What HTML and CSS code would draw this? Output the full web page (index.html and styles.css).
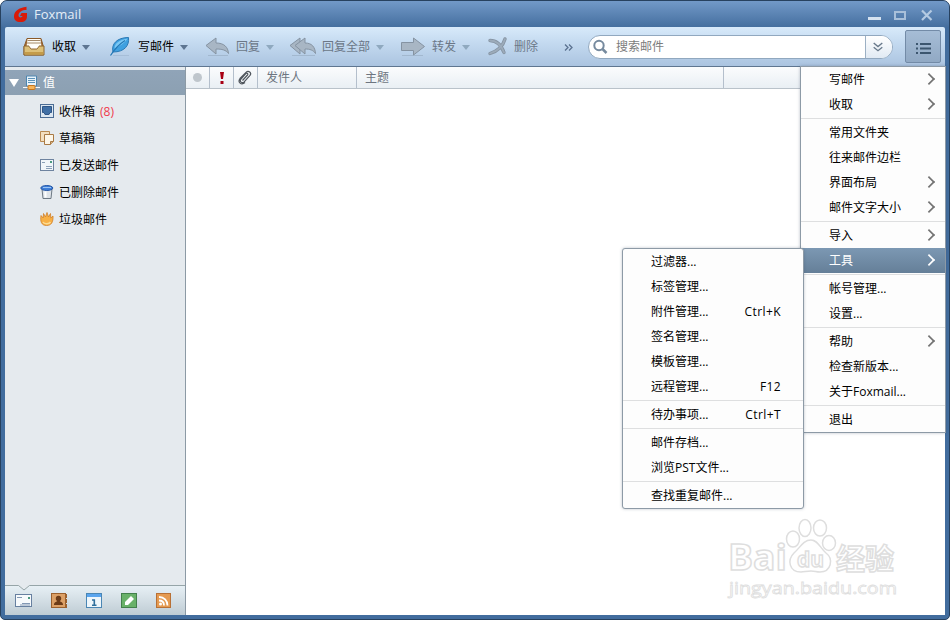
FILE: index.html
```html
<!DOCTYPE html>
<html lang="zh-CN">
<head>
  <meta charset="UTF-8">
  <title>Foxmail</title>
  <link rel="stylesheet" href="styles.css">
</head>
<body>
  <div class="window">
    <!-- 标题栏 -->
    <header class="titlebar">
      <svg class="logo" width="16" height="17" viewBox="0 0 16 17"><path d="M13.500.800v3.200C9 4 5.500 6 5.500 9.500c0 2.300 3.500 2.700 4 .5H7L8.500 7H14v3c0 4-2 6-6.500 6S1 14 1 10.500C1 5 6 1.800 13.500.800z" fill="#d91a08"/></svg>
      <span class="title">Foxmail</span>
      <svg class="win-buttons" width="68" height="16" viewBox="0 0 68 16">
        <path d="M1 12.500h13" stroke="#d5e2f0" stroke-width="3"/>
        <rect x="28" y="6" width="10" height="7" fill="none" stroke="#a9c0da" stroke-width="2"/>
        <path d="M55 4.500l9.500 9.500M64.500 4.500L55 14" stroke="#b4cae2" stroke-width="2.200"/>
      </svg>
    </header>

    <!-- 工具栏 -->
    <div class="toolbar">
      <div class="tool tool-receive">
        <svg width="24" height="24" viewBox="0 0 24 24">
          <path d="M5 3.500h14l2.500 8.500v8H2v-8z" fill="#a06a35" stroke="#8a5a2a"/>
          <path d="M5.500 4h13l1 8H4.500z" fill="#fffdf6"/>
          <path d="M5.500 5.500h13M5 8h14" stroke="#a58a6a"/>
          <path d="M2 11h5l2 3h6l2-3h5v9H2z" fill="#ddc078" stroke="#8c642e"/>
          <path d="M7 10.500l2 3h6l2-3z" fill="#fff"/>
          <path d="M3 17h18v2.500H3z" fill="#c49b49"/>
        </svg>
        <span>收取</span><i class="drop"></i>
      </div>
      <div class="tool tool-write">
        <svg width="24" height="24" viewBox="0 0 24 24">
          <path d="M4 20.500h16" stroke="#9db5cf" opacity=".6"/>
          <path d="M4 17C2 9 8 2.500 19.500 2.500c1 8-4 14.500-15.500 14.500z" fill="#3fa0e0" stroke="#2a79b5"/>
          <path d="M5.500 13.500C5.500 8.500 10 5 18.500 3.500c-3 5-7 7-13 10z" fill="#7cc8f4"/>
          <path d="M1.500 20.500C5 15 9 10 16 5.500" fill="none" stroke="#2277b5" stroke-width="1.200"/>
        </svg>
        <span>写邮件</span><i class="drop"></i>
      </div>
      <div class="tool tool-reply off">
        <svg width="25" height="24" viewBox="0 0 25 24">
          <path d="M3 20.500h20" stroke="#8fa3b8" opacity=".5"/>
          <path d="M1 10.500L11 3v5c8 0 12 4 12.500 10.500C21 15 17 14 11 14v5z" fill="#a8b6c4" stroke="#8593a2"/>
        </svg>
        <span>回复</span><i class="drop"></i>
      </div>
      <div class="tool tool-replyall off">
        <svg width="28" height="24" viewBox="0 0 28 24">
          <path d="M3 20.500h23" stroke="#8fa3b8" opacity=".5"/>
          <path d="M1 10.500L11 3v16z" fill="#a8b6c4" stroke="#8593a2"/>
          <path d="M6 10.500L16 3v5c7 0 10 4 10.500 10.500C24 15 21 14 16 14v5z" fill="#a8b6c4" stroke="#8593a2"/>
        </svg>
        <span>回复全部</span><i class="drop"></i>
      </div>
      <div class="tool tool-forward off">
        <svg width="26" height="24" viewBox="0 0 26 24">
          <path d="M2 20.500h21" stroke="#8fa3b8" opacity=".5"/>
          <path d="M1.500 7.500h12V3L24.500 11.500 13.500 20v-4.500h-12z" fill="#a8b6c4" stroke="#8593a2"/>
        </svg>
        <span>转发</span><i class="drop"></i>
      </div>
      <div class="tool tool-delete off">
        <svg width="21" height="24" viewBox="0 0 21 24">
          <path d="M3 5.500c6 0 11 4 14 12M18 4C16 11 11 16 3 18.500" fill="none" stroke="#8593a2" stroke-width="3.400" stroke-linecap="round"/>
          <path d="M3 5.500c6 0 11 4 14 12M18 4C16 11 11 16 3 18.500" fill="none" stroke="#9cabba" stroke-width="1.800" stroke-linecap="round"/>
        </svg>
        <span>删除</span>
      </div>
      <svg class="more" width="10" height="8" viewBox="0 0 10 8"><path d="M1 1.500l3 3-3 3M5 1.500l3 3-3 3" fill="none" stroke="#5b7290" stroke-width="1.300"/></svg>
      <div class="search">
        <svg class="glass" width="16" height="16" viewBox="0 0 16 16"><circle cx="6" cy="6.500" r="4.700" fill="none" stroke="#768a9e" stroke-width="2"/><path d="M9.500 10l4 4" stroke="#768a9e" stroke-width="2.500"/></svg>
        <span class="placeholder">搜索邮件</span>
        <span class="expand"><svg width="10" height="10" viewBox="0 0 10 10"><path d="M.7 1l4.300 3.500L9.300 1M.7 5.200L5 8.700l4.300-3.500" fill="none" stroke="#68798b" stroke-width="1.400"/></svg></span>
      </div>
      <div class="menu-button">
        <svg width="16" height="13" viewBox="0 0 16 13"><path d="M0 2h2M4 2h11M0 6.500h2M4 6.500h11M0 11h2M4 11h11" stroke="#3c566f" stroke-width="2"/></svg>
      </div>
    </div>

    <div class="content">
      <!-- 文件夹 -->
      <aside class="sidebar">
        <div class="account">
          <svg class="tri" width="10" height="8" viewBox="0 0 10 8"><path d="M0 0h10L5 8z" fill="#fff"/></svg>
          <svg width="17" height="16" viewBox="0 0 17 16">
            <path d="M3.500 1h10v10h-10z" fill="#e8f3fa" stroke="#4e86b0"/>
            <path d="M5 3.500h7M5 5.500h7M5 7.500h7" stroke="#5c93ba"/>
            <path d="M0 12.500h17" stroke="#f5f9fb"/>
            <rect x="5" y="10.500" width="7" height="4" rx="1" fill="#f5b45a" stroke="#c8751c"/>
          </svg>
          <span>值</span>
        </div>
        <ul class="folders">
          <li>
            <svg width="16" height="16" viewBox="0 0 16 16"><rect x=".5" y=".5" width="13" height="13" fill="#dce7f1" stroke="#4a6c94"/><path d="M2.500 2.500h9v6H10l-1 2H5l-1-2H2.500z" fill="#3f6fa5" stroke="#2f5687"/></svg>
            <span>收件箱</span><span class="count">(8)</span>
          </li>
          <li>
            <svg width="16" height="16" viewBox="0 0 16 16"><path d="M.5.500h9v10h-9z" fill="#f3dfc0" stroke="#b98a52"/><path d="M4.500 3.500h9v7l-3 3h-6z" fill="#fdf6e8" stroke="#a97a45"/><path d="M13.500 10.500h-3v3" fill="#d7b488" stroke="#a97a45"/></svg>
            <span>草稿箱</span>
          </li>
          <li>
            <svg width="16" height="16" viewBox="0 0 16 16"><rect x=".5" y="1.500" width="13" height="11" fill="#f1f6fa" stroke="#6e839f"/><path d="M2 4.500h3M6 8.500h6M6 10.500h6" stroke="#8ba0b8"/><path d="M10 3h2v2h-2z" fill="#4c9a80"/></svg>
            <span>已发送邮件</span>
          </li>
          <li>
            <svg width="16" height="16" viewBox="0 0 16 16"><path d="M2 4h10l-1 9.500H3z" fill="#dfe4e8" stroke="#6d7984"/><path d="M5.500 6.500v6" stroke="#fff" stroke-width="2"/><ellipse cx="6.800" cy="3" rx="6" ry="2.500" fill="#3f7fd8" stroke="#2758a6"/><path d="M3 2.500h8" stroke="#9cc5f5"/></svg>
            <span>已删除邮件</span>
          </li>
          <li>
            <svg width="16" height="16" viewBox="0 0 16 16"><path d="M1 3.500l2.200 2.500.3-4.500L5.500 5 7 .5 8.500 5l2-3.500.3 4.500L13 4c.3 6-1.500 9.500-6.500 9.500S0 9.500 1 3.500z" fill="#f7b045" stroke="#d1802a" stroke-width=".8"/><path d="M3 10c1 2 6 2.500 7.500 0" fill="none" stroke="#fddc92" stroke-width="1.500"/></svg>
            <span>垃圾邮件</span>
          </li>
        </ul>
        <div class="modules">
          <svg class="notch" width="12" height="6" viewBox="0 0 12 6"><path d="M0 0h12L6 5z" fill="#e5eaee"/><path d="M.5.500L6 5 11.500.500" fill="none" stroke="#96a5a8"/></svg>
          <svg width="18" height="16" viewBox="0 0 18 16"><rect x=".5" y="1.500" width="16" height="12" fill="#f7fafc" stroke="#6780a0"/><path d="M2 4.500h5M7 10.500h8M5 12h10" stroke="#8298b4"/><path d="M13 4h2v2h-2z" fill="#4c9a80"/></svg>
          <svg width="17" height="16" viewBox="0 0 17 16"><rect x=".5" y=".5" width="14" height="14" fill="#dca066" stroke="#9b602d"/><path d="M15.500 1v4M15.500 6v4M15.500 11v4" stroke="#9b602d"/><circle cx="7.500" cy="5.500" r="2.700" fill="#6d3c18"/><path d="M3 12c0-3 2-3 3.500-4h2c1.500 1 3.500 1 3.500 4z" fill="#6d3c18"/></svg>
          <svg width="17" height="16" viewBox="0 0 17 16"><rect x=".5" y=".5" width="15" height="14" fill="#eef6fb" stroke="#4a86b4"/><path d="M1 1h14v3H1z" fill="#5aa5ee"/><path d="M6 7h2.300v5M6 12.200h4.500" fill="none" stroke="#2f6f9c" stroke-width="1.600"/></svg>
          <svg width="17" height="16" viewBox="0 0 17 16"><rect x=".5" y=".5" width="15" height="14" fill="#69b169" stroke="#43804b"/><path d="M4 12V9l6-6 3 3-6 6z" fill="#fff"/></svg>
          <svg width="17" height="16" viewBox="0 0 17 16"><rect x=".5" y=".5" width="14" height="14" fill="#e59a50" stroke="#b87035"/><circle cx="4.500" cy="11" r="1.500" fill="#fff"/><path d="M3 7.500c3 0 5 2 5 5M3 4c5 0 8.500 3.500 8.500 8.500" fill="none" stroke="#fff" stroke-width="1.800"/></svg>
        </div>
      </aside>

      <!-- 邮件列表 -->
      <main class="mail-list">
        <div class="columns">
          <div class="col col-dot"><i class="dot"></i></div>
          <div class="col col-flag"><svg width="6" height="12" viewBox="0 0 6 12"><path d="M1 0h4l-1 7H2z" fill="#a80014"/><rect x="1.500" y="9" width="3" height="3" fill="#a80014"/></svg></div>
          <div class="col col-clip"><svg width="15" height="15" viewBox="0 0 15 15"><path d="M4.500 10.500L9.500 5c1-1.200-.5-2.500-1.700-1.300L3 9c-2 2.500 1 5 3.200 2.800l5.800-6.500c2-2.500-1.500-5.500-4-3L2 8.500c-3 4 1.500 7 5 4" fill="none" stroke="#50565d" stroke-width="1.200"/></svg></div>
          <div class="col col-from">发件人</div>
          <div class="col col-subject">主题</div>
        </div>
      </main>
    </div>

    <svg class="watermark" width="180" height="92" viewBox="0 0 180 92">
      <g fill="#fff" stroke="#dedede" stroke-width="1.500">
        <ellipse cx="73" cy="29" rx="6.500" ry="8"/>
        <ellipse cx="85" cy="18" rx="6" ry="8.500"/>
        <ellipse cx="100" cy="18" rx="6.500" ry="8"/>
        <ellipse cx="109" cy="33" rx="6.500" ry="7.500"/>
        <path d="M91 30c7 0 9 8 15 13 8 6 5 19-6 19-4 0-5-1-9-1s-7 1-10 1c-12 0-14-12-7-19 6-5 9-13 17-13z"/>
        <text class="wm-latin" x="8" y="60" font-size="36" textLength="59" lengthAdjust="spacingAndGlyphs">Bai</text>
        <text class="wm-latin" x="77" y="57" font-size="22" textLength="27" lengthAdjust="spacingAndGlyphs">du</text>
        <text class="wm-cjk" x="116" y="60" font-size="29">经验</text>
        <text class="wm-url" x="9" y="84" font-size="17" textLength="168" lengthAdjust="spacingAndGlyphs">jingyan.baidu.com</text>
      </g>
    </svg>

    <!-- 主菜单 -->
    <nav class="menu main-menu">
      <div class="item sub">写邮件</div>
      <div class="item sub">收取</div>
      <hr>
      <div class="item">常用文件夹</div>
      <div class="item">往来邮件边栏</div>
      <div class="item sub">界面布局</div>
      <div class="item sub">邮件文字大小</div>
      <hr>
      <div class="item sub">导入</div>
      <div class="item sub active">工具</div>
      <hr>
      <div class="item">帐号管理...</div>
      <div class="item">设置...</div>
      <hr>
      <div class="item sub">帮助</div>
      <div class="item">检查新版本...</div>
      <div class="item">关于Foxmail...</div>
      <hr>
      <div class="item">退出</div>
    </nav>

    <!-- 工具子菜单 -->
    <nav class="menu tools-menu">
      <div class="item">过滤器...</div>
      <div class="item">标签管理...</div>
      <div class="item">附件管理...<kbd>Ctrl+K</kbd></div>
      <div class="item">签名管理...</div>
      <div class="item">模板管理...</div>
      <div class="item">远程管理...<kbd>F12</kbd></div>
      <hr>
      <div class="item">待办事项...<kbd>Ctrl+T</kbd></div>
      <hr>
      <div class="item">邮件存档...</div>
      <div class="item">浏览PST文件...</div>
      <hr>
      <div class="item">查找重复邮件...</div>
    </nav>
  </div>
</body>
</html>
```
FILE: styles.css
```css
* {
  box-sizing: border-box;
}
body {
  margin: 0;
  background: #fff;
  font: 12px/16px "Open Sans", "Noto Sans CJK SC", sans-serif;
  color: #000;
}
svg {
  display: block;
  flex: none;
}
.window {
  position: relative;
  width: 950px;
  height: 620px;
  display: flex;
  flex-direction: column;
  border: 1px solid #27415f;
  border-radius: 7px 7px 5px 5px;
  background: #426d9e;
  overflow: hidden;
  padding: 0 4px 4px;
}

/* 标题栏 */
.titlebar {
  height: 26px;
  flex: none;
  display: flex;
  align-items: center;
  margin: 0 -4px;
  padding: 0 14px 0 12px;
  background: linear-gradient(#7299c8, #456f9f);
}
.title {
  margin-left: 5px;
  font-size: 13px;
  color: #e4edf7;
}
.win-buttons {
  margin-left: auto;
}

/* 工具栏 */
.toolbar {
  height: 40px;
  flex: none;
  display: flex;
  align-items: center;
  padding-left: 17px;
  background: linear-gradient(#d8eafa, #c4daf0 40%, #abc4e0);
  border-bottom: 1px solid #5f7690;
  border-radius: 2px 2px 0 0;
}
.tool {
  display: flex;
  align-items: center;
  flex: none;
  white-space: nowrap;
}
.tool span {
  margin-left: 6px;
}
.tool-write span, .tool-replyall span {
  margin-left: 5px;
}
.off span {
  color: #6b7787;
}
.drop {
  margin: 2px 0 0 6px;
  border: 4px solid transparent;
  border-top: 5px solid #5d7591;
  border-bottom: 0;
}
.off .drop {
  border-top-color: #8fa9bf;
}
.tool-receive {
  width: 87px;
}
.tool-write {
  width: 96px;
}
.tool-reply {
  width: 84px;
}
.tool-replyall {
  width: 111px;
}
.tool-forward {
  width: 87px;
}
.tool-delete {
  width: 77px;
}
.search {
  width: 305px;
  height: 24px;
  margin-left: 14px;
  display: flex;
  align-items: center;
  padding-left: 4px;
  background: #fff;
  border: 1px solid #91a8bf;
  border-radius: 12px;
  overflow: hidden;
}
.placeholder {
  flex: 1;
  margin-left: 7px;
  color: #7c7c7c;
}
.expand {
  width: 27px;
  height: 22px;
  display: flex;
  align-items: center;
  justify-content: center;
  padding-right: 3px;
  border-left: 1px solid #9cb0c4;
  background: linear-gradient(#fff, #e1eaf4);
}
.menu-button {
  width: 36px;
  height: 33px;
  margin-left: 12px;
  display: flex;
  align-items: center;
  justify-content: center;
  padding: 3px 0 0 1px;
  background: linear-gradient(#a6bdd6, #91a9c4);
  border: 1px solid #738ba7;
  border-radius: 2px;
}

.content {
  flex: 1;
  display: flex;
  min-height: 0;
  background: #fff;
}

/* 文件夹 */
.sidebar {
  width: 181px;
  flex: none;
  display: flex;
  flex-direction: column;
  padding-top: 3px;
  background: #e5eaee;
  border-right: 1px solid #8c9aa5;
}
.account {
  height: 25px;
  flex: none;
  display: flex;
  align-items: center;
  padding-left: 4px;
  background: linear-gradient(#90a4b8, #8ca0b2);
  color: #fff;
}
.tri {
  margin-right: 4px;
}
.account span {
  margin-left: 3px;
}
.folders {
  flex: 1;
  margin: 0;
  padding: 3px 0 0 35px;
  list-style: none;
}
.folders li {
  height: 27px;
  display: flex;
  align-items: center;
}
.folders span {
  margin-left: 3px;
}
.folders .count {
  margin-left: 5px;
  color: #f03a4c;
}
.modules {
  position: relative;
  height: 30px;
  flex: none;
  display: flex;
  align-items: center;
  gap: 18px;
  padding-left: 10px;
  border-top: 1px solid #96a5a8;
  background: linear-gradient(#e7f0f5, #bfccd4);
}
.notch {
  position: absolute;
  left: 13px;
  top: -1px;
}

/* 邮件列表 */
.mail-list {
  flex: 1;
}
.columns {
  height: 22px;
  display: flex;
  background: linear-gradient(#fbfcfd, #e9eff4);
  border-bottom: 1px solid #b9c2ca;
  color: #6d7580;
}
.col {
  display: flex;
  align-items: center;
  border-right: 1px solid #b4bfcc;
}
.col-dot, .col-flag, .col-clip {
  width: 24px;
  justify-content: center;
}
.dot {
  width: 9px;
  height: 9px;
  border-radius: 50%;
  background: #bfc6cc;
}
.col-from {
  width: 99px;
  padding-left: 8px;
}
.col-subject {
  width: 367px;
  padding-left: 8px;
}

/* 菜单 */
.menu {
  position: absolute;
  background: #fdfdfd;
  border: 1px solid #8d9aa6;
  box-shadow: 0 0 3px rgba(60, 80, 100, .35);
}
.main-menu {
  left: 799px;
  top: 65px;
  width: 146px;
  height: 367px;
}
.tools-menu {
  left: 621px;
  top: 247px;
  width: 182px;
  height: 261px;
  border-radius: 3px;
}
.item {
  height: 25px;
  display: flex;
  align-items: center;
  padding: 0 22px 0 28px;
}
.menu hr {
  height: 1px;
  margin: 1px 0;
  border: 0;
  background: #dedfe0;
}
.item kbd {
  margin-left: auto;
  font: inherit;
  letter-spacing: .4px;
}
.sub::after {
  content: "";
  width: 8px;
  height: 8px;
  margin: 0 -11px 2px auto;
  border: solid #747474;
  border-width: 2px 2px 0 0;
  transform: rotate(45deg) scale(.85);
}
.active {
  color: #fff;
  background: linear-gradient(#7c98b3, #657f98);
}
.active::after {
  border-color: #fff;
}

.watermark {
  position: absolute;
  left: 719px;
  top: 509px;
}
.wm-latin {
  font-family: "Open Sans", sans-serif;
  font-weight: 700;
}
.wm-cjk {
  font-family: "Noto Sans CJK SC", sans-serif;
  font-weight: 700;
}
.wm-url {
  font-family: "Open Sans", sans-serif;
  stroke-width: .8px;
}
```
